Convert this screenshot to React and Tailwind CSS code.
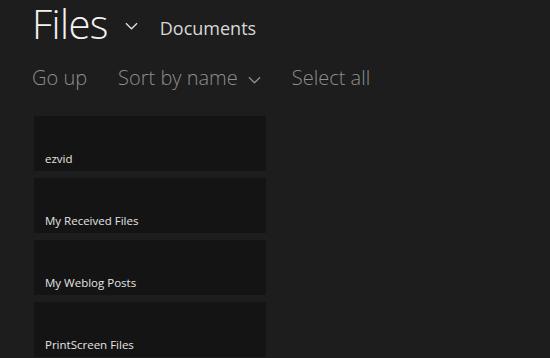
import React from "react";

const Chevron = ({ className }) => (
  <svg className={className} viewBox="0 0 14 8" fill="none" stroke="currentColor" strokeWidth="1.4">
    <path d="M1 1 L7 7 L13 1" />
  </svg>
);

export default function App() {
  const items = ["ezvid", "My Received Files", "My Weblog Posts", "PrintScreen Files"];
  return (
    <div className="w-[550px] h-[358px] overflow-hidden bg-[#1d1d1d] pl-[32px]" style={{ fontFamily: '"Open Sans", "Noto Sans", sans-serif' }}>
      <div className="flex items-center h-[48px]">
        <span className="text-[40px] font-light text-[#f2f2f2] leading-[48px] tracking-[-0.6px]">Files</span>
        <Chevron className="w-[13px] h-[8px] ml-[17px] mt-[4px] text-[#e0e0e0]" />
        <span className="ml-[22px] mt-[8px] text-[18px] text-[#d8d8d8] leading-[24px]">Documents</span>
      </div>
      <div className="flex items-center h-[58px] pt-[2px] text-[20px] font-light text-[#8e8e8e]">
        <span>Go up</span>
        <span className="ml-[31px]">Sort by name</span>
        <Chevron className="w-[13px] h-[8px] ml-[10px] mt-[3px]" />
        <span className="ml-[31px]">Select all</span>
      </div>
      <div className="flex flex-col gap-[7px] mt-[10px] ml-[2px]">
        {items.map((t) => (
          <div key={t} className="w-[232px] h-[55px] bg-[#141414] flex items-end px-[11px] pb-[7px]">
            <span className="text-[11.5px] text-[#e4e4e4] leading-none">{t}</span>
          </div>
        ))}
      </div>
    </div>
  );
}
